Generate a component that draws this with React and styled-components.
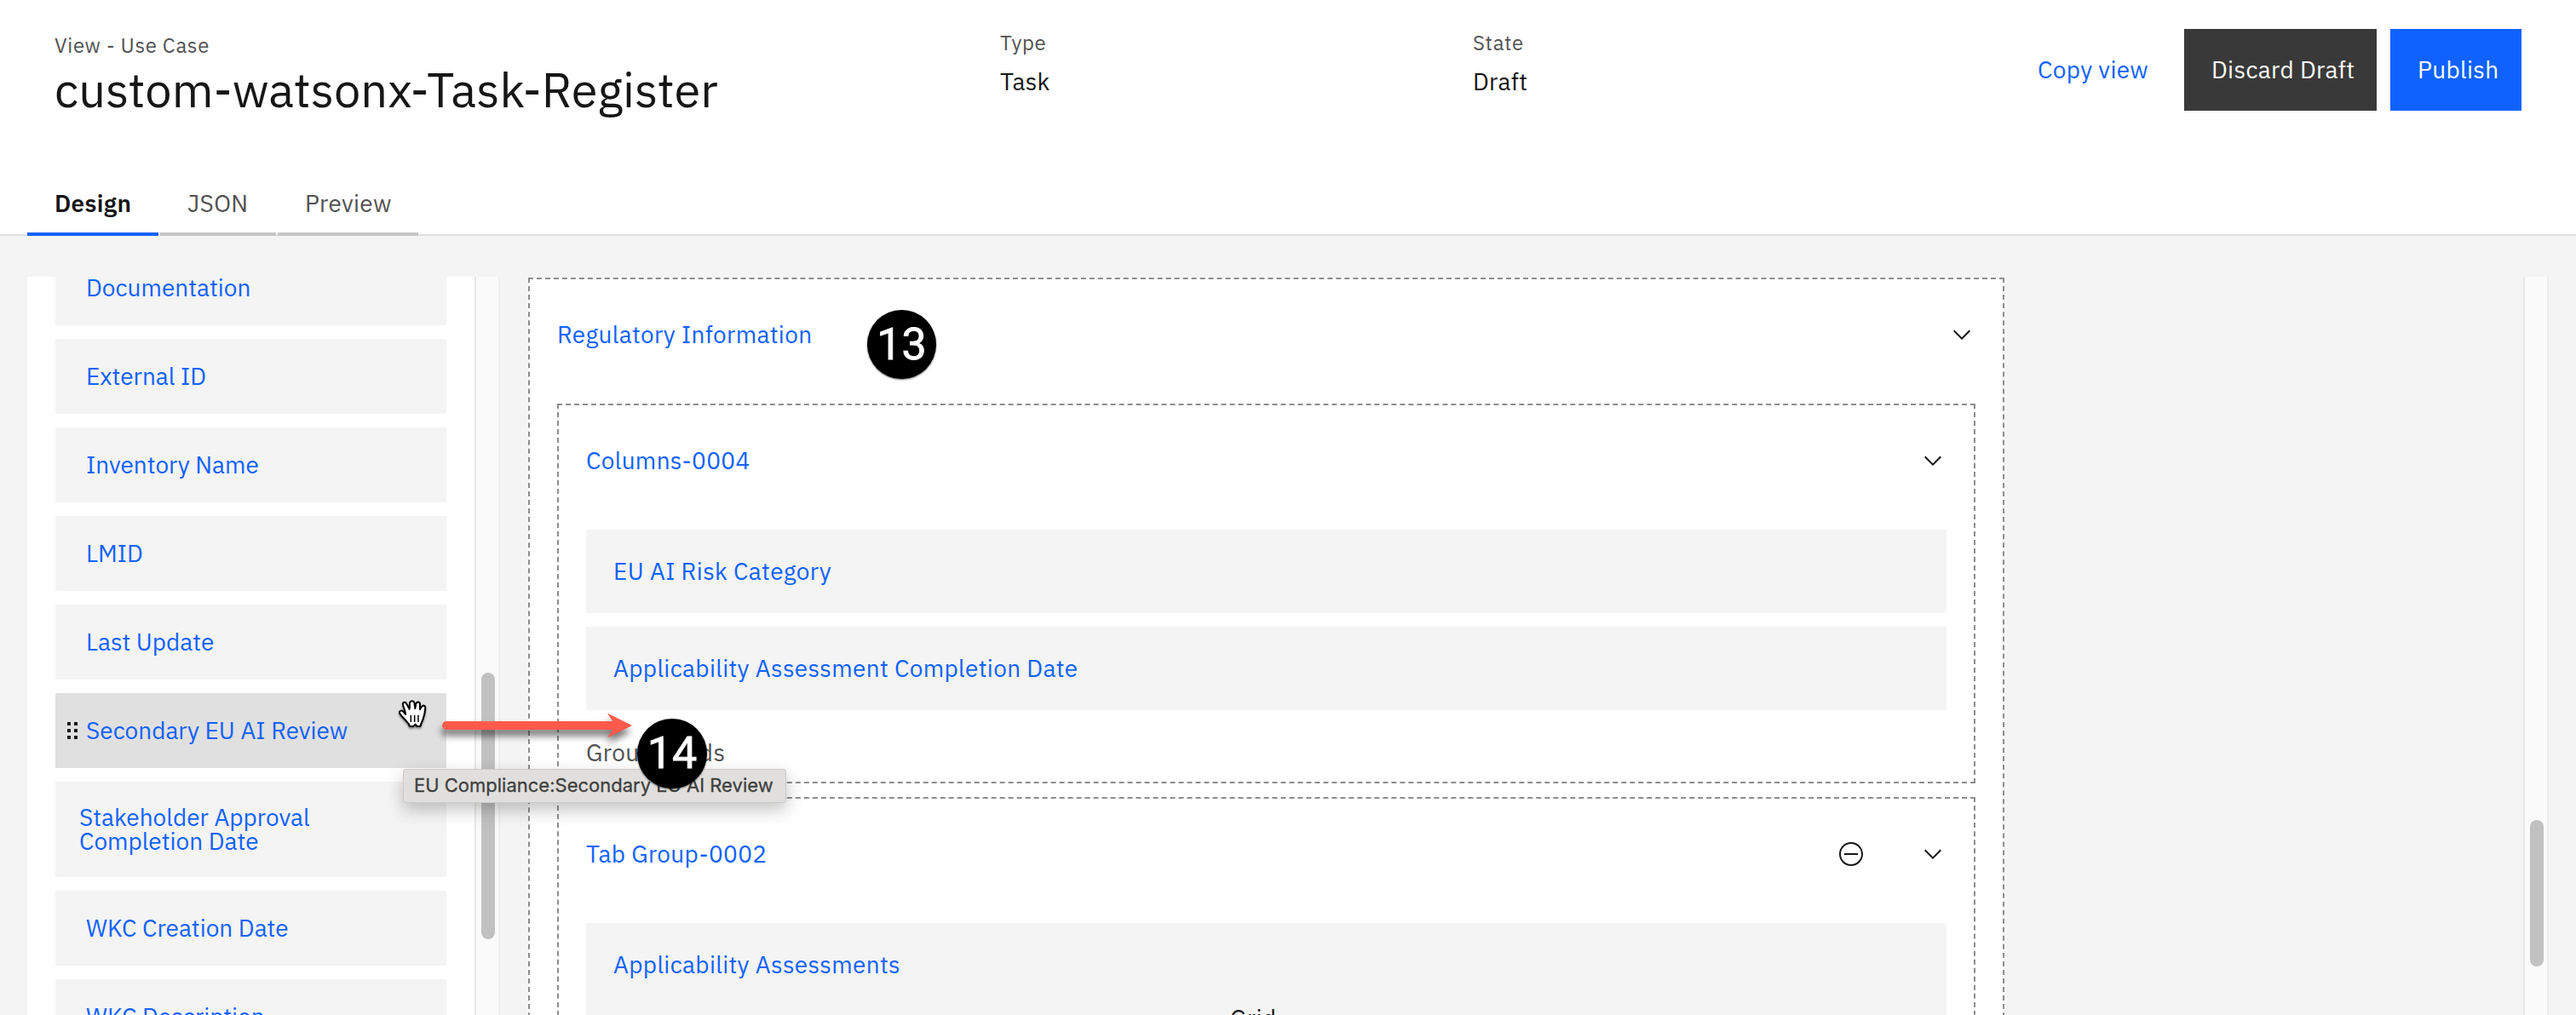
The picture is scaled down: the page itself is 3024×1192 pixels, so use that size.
import React from "react";
import styled, { createGlobalStyle } from "styled-components";

const GlobalStyle = createGlobalStyle`
  *, *::before, *::after { box-sizing: border-box; }
  body {
    margin: 0;
    background: #f4f4f4;
    color: #161616;
    font-family: "IBM Plex Sans", Roboto, "Liberation Sans", sans-serif;
    font-size: 28px;
    line-height: 28px;
  }
`;

const Page = styled.div`
  position: relative;
  width: 3024px;
  height: 1192px;
  overflow: hidden;
  display: flex;
  flex-direction: column;
`;

const Label = styled.span`
  letter-spacing: ${(p) => p.$ls ?? 0.32}px;
  white-space: nowrap;
`;

const Header = styled.header`
  height: 277px;
  flex: none;
  display: flex;
  flex-direction: column;
  justify-content: space-between;
  background: #fff;
  box-shadow: inset 0 -2px 0 #e0e0e0;
`;

const HeaderTop = styled.div`
  display: grid;
  grid-template-columns: 1110px 555px 1fr;
  padding: 34px 64px 0;
`;

const TitleBlock = styled.div`
  padding-top: 3px;
`;

const Caption = styled.div`
  font-size: 24px;
  line-height: 32px;
  color: #525252;
`;

const Title = styled.h1`
  margin: 0;
  font-size: 56px;
  font-weight: 400;
  line-height: 72px;
`;

const Meta = styled.div``;

const MetaValue = styled.div`
  line-height: 60px;
`;

const MetaRow = styled.div`
  display: flex;
  justify-content: space-between;
`;

const Actions = styled.div`
  display: flex;
`;

const Button = styled.button`
  height: 96px;
  width: ${(p) => p.$width}px;
  margin-left: ${(p) => p.$gap || 0}px;
  padding: 0 0 0 ${(p) => p.$pad || 32}px;
  border: 0;
  font: inherit;
  text-align: left;
  color: ${(p) => p.$color || "#fff"};
  background: ${(p) => p.$bg || "transparent"};
`;

const Tabs = styled.nav`
  display: flex;
  gap: 2px;
  padding-left: 32px;
`;

const Tab = styled.div`
  width: ${(p) => p.$width}px;
  height: 72px;
  padding-left: 32px;
  line-height: 68px;
  border-bottom: 4px solid ${(p) => (p.$active ? "#0f62fe" : "#c6c6c6")};
  color: ${(p) => (p.$active ? "#161616" : "#525252")};
  font-weight: ${(p) => (p.$active ? 600 : 400)};
`;

const Workspace = styled.main`
  flex: 1;
  min-height: 0;
  display: flex;
  padding: 48px 32px 0;
`;

const Sidebar = styled.aside`
  width: 525px;
  padding: 0 33px;
  background: #fff;
  overflow: hidden;
`;

const FieldList = styled.div`
  display: flex;
  flex-direction: column;
  gap: 16px;
  margin-top: -31px;
`;

const Field = styled.div`
  flex: none;
  display: flex;
  align-items: center;
  height: ${(p) => (p.$tall ? 112 : 88)}px;
  padding-left: ${(p) => (p.$tall ? 28 : p.$hover ? 14 : 36)}px;
  background: ${(p) => (p.$hover ? "#e0e0e0" : "#f4f4f4")};
  color: #0f62fe;
`;

const Lines = styled.div`
  display: flex;
  flex-direction: column;
`;

const Handle = styled.div`
  display: grid;
  grid-template-columns: 4px 4px;
  gap: 4px;
  margin-right: 10px;
`;

const Dot = styled.i`
  height: 4px;
  background: #161616;
`;

const Track = styled.div`
  flex: none;
  width: 30px;
  padding: ${(p) => p.$offset}px 0 0 6px;
  background: #fafafa;
  border-left: 2px solid #e8e8e8;
  border-right: 2px solid #ededed;
`;

const Thumb = styled.div`
  width: 16px;
  height: ${(p) => p.$size}px;
  border-radius: 8px;
  background: #c1c1c1;
`;

const Canvas = styled.section`
  flex: 1;
  padding: 1px 0 0 33px;
  overflow: hidden;
`;

const Group = styled.div`
  width: ${(p) => (p.$root ? "1733px" : "auto")};
  height: ${(p) => (p.$open ? "1100px" : "auto")};
  margin-bottom: 16px;
  padding: 0 32px;
  border: 2px dashed #8d8d8d;
  background: #fff;
`;

const GroupHeader = styled.div`
  height: 130px;
  margin-bottom: 16px;
  display: flex;
  align-items: center;
  justify-content: space-between;
  color: #0f62fe;
`;

const Icons = styled.div`
  display: flex;
  gap: 64px;
  color: #161616;
`;

const Icon = styled.svg`
  display: block;
  width: 32px;
  height: 32px;
  fill: currentColor;
`;

const Item = styled.div`
  height: ${(p) => p.$height || 98}px;
  margin-bottom: ${(p) => p.$gap || 0}px;
  padding-left: 32px;
  line-height: 98px;
  background: #f4f4f4;
  color: #0f62fe;
`;

const ItemKind = styled.div`
  padding-left: 724px;
  line-height: 28px;
  color: #161616;
`;

const Hint = styled.div`
  padding: 32px 0 16px;
  line-height: 36px;
  color: #525252;
`;

const Badge = styled.div`
  position: absolute;
  left: ${(p) => p.$x}px;
  top: ${(p) => p.$y}px;
  width: ${(p) => p.$size}px;
  height: ${(p) => p.$size}px;
  border-radius: 50%;
  background: #000;
  color: #fff;
  font: 400 52px/82px Roboto, "Liberation Sans", sans-serif;
  -webkit-text-stroke: 0.8px #fff;
  text-align: center;
  box-shadow: 0 1px 2px rgba(0, 0, 0, 0.6);
`;

const Tooltip = styled.div`
  position: absolute;
  left: 473px;
  top: 903px;
  width: 450px;
  height: 40px;
  padding-left: 12px;
  border: 1px solid #cbcac8;
  border-radius: 3px;
  background: #e0dfdd;
  color: #3f3f3e;
  font: 400 22px/37px Inter, "Liberation Sans", sans-serif;
  -webkit-text-stroke: 0.3px #3f3f3e;
  box-shadow: 0 8px 20px rgba(0, 0, 0, 0.24);
`;

const Drawing = styled.svg`
  position: absolute;
  left: ${(p) => p.$x}px;
  top: ${(p) => p.$y}px;
  overflow: visible;
  filter: drop-shadow(${(p) => p.$shadow});
`;

const Chevron = () => (
  <Icon viewBox="0 0 16 16">
    <path d="M8 11L3 6 3.7 5.3 8 9.6 12.3 5.3 13 6z" />
  </Icon>
);

const Remove = () => (
  <Icon viewBox="0 0 16 16">
    <path d="M8 2c3.3 0 6 2.7 6 6s-2.7 6-6 6-6-2.7-6-6 2.7-6 6-6m0-1C4.100 1 1 4.100 1 8s3.100 7 7 7 7-3.100 7-7-3.100-7-7-7z" />
    <path d="M4 7.500H12V8.500H4z" />
  </Icon>
);

const fields = [
  { text: ["Documentation"] },
  { text: ["External ID"] },
  { text: ["Inventory Name"] },
  { text: ["LMID"] },
  { text: ["Last Update"] },
  { text: ["Secondary EU AI Review"], hover: true },
  { text: ["Stakeholder Approval", "Completion Date"] },
  { text: ["WKC Creation Date"] },
  { text: ["WKC Description"] },
];

const SectionHeader = ({ title, removable }) => (
  <GroupHeader>
    <Label>{title}</Label>
    <Icons>
      {removable && <Remove />}
      <Chevron />
    </Icons>
  </GroupHeader>
);

export default function App() {
  return (
    <Page>
      <GlobalStyle />
      <Header>
        <HeaderTop>
          <TitleBlock>
            <Caption><Label $ls={0.64}>View - Use Case</Label></Caption>
            <Title><Label $ls={0}>custom-watsonx-Task-Register</Label></Title>
          </TitleBlock>
          <Meta>
            <Caption><Label $ls={0.64}>Type</Label></Caption>
            <MetaValue><Label>Task</Label></MetaValue>
          </Meta>
          <MetaRow>
            <Meta>
              <Caption><Label $ls={0.64}>State</Label></Caption>
              <MetaValue><Label>Draft</Label></MetaValue>
            </Meta>
            <Actions>
              <Button $width={203} $color="#0f62fe" $pad={31}><Label>Copy view</Label></Button>
              <Button $width={226} $bg="#393939"><Label>Discard Draft</Label></Button>
              <Button $width={154} $gap={16} $bg="#0f62fe"><Label>Publish</Label></Button>
            </Actions>
          </MetaRow>
        </HeaderTop>
        <Tabs>
          <Tab $width={154} $active><Label>Design</Label></Tab>
          <Tab $width={136}><Label>JSON</Label></Tab>
          <Tab $width={165}><Label>Preview</Label></Tab>
        </Tabs>
      </Header>

      <Workspace>
        <Sidebar>
          <FieldList>
            {fields.map((f) => (
              <Field key={f.text[0]} $hover={f.hover} $tall={f.text.length > 1}>
                {f.hover && (
                  <Handle>
                    {[0, 1, 2, 3, 4, 5].map((n) => <Dot key={n} />)}
                  </Handle>
                )}
                <Lines>
                  {f.text.map((t) => <Label key={t} $ls={0}>{t}</Label>)}
                </Lines>
              </Field>
            ))}
          </FieldList>
        </Sidebar>
        <Track $offset={465}><Thumb $size={313} /></Track>

        <Canvas>
          <Group $root $open>
            <SectionHeader title="Regulatory Information" />
            <Group>
              <SectionHeader title="Columns-0004" />
              <Item $gap={16}><Label>EU AI Risk Category</Label></Item>
              <Item><Label>Applicability Assessment Completion Date</Label></Item>
              <Hint><Label>Group Fields</Label></Hint>
            </Group>
            <Group $open>
              <SectionHeader title="Tab Group-0002" removable />
              <Item $height={300}>
                <Label>Applicability Assessments</Label>
                <ItemKind><Label>Grid</Label></ItemKind>
              </Item>
            </Group>
          </Group>
        </Canvas>
        <Track $offset={638}><Thumb $size={172} /></Track>
      </Workspace>

      <Tooltip>EU Compliance:Secondary EU AI Review</Tooltip>
      <Drawing $x={519} $y={837} $shadow="-1px 7px 4px rgba(0,0,0,0.55)" width="224" height="30" viewBox="0 0 224 30">
        <path d="M5 10H200L194 .5L223 15L194 29.500L200 20H5a5 5 0 0 1 0-10z" fill="#ff5a4b" />
      </Drawing>
      <Drawing $x={460} $y={810} $shadow="0 2px 1px rgba(0,0,0,0.4)" width="60" height="60" viewBox="0 0 180 180">
        <path
          d="M63 129C60 116 52 113 45 104C38 96 29 89 27 81C26 73 35 71 41 78L48 87C49 76 39 61 39 51C39 43 48 42 52 50L62 68C64 60 61 51 64 44C67 38 77 38 79 45L82 66C84 58 83 51 87 46C91 41 98 43 99 50L99 70C102 65 104 60 108 57C113 54 119 58 118 65C117 78 114 92 110 103C107 112 103 116 101 128L88 129L83 122L76 129Z"
          fill="#fff" stroke="#000" strokeWidth="6" strokeLinejoin="round"
        />
        <path d="M67 89V114M80 89V114M93 89V114" stroke="#000" strokeWidth="4.5" />
      </Drawing>
      <Badge $x={1018} $y={364} $size={81}>13</Badge>
      <Badge $x={748} $y={844} $size={82}>14</Badge>
    </Page>
  );
}
